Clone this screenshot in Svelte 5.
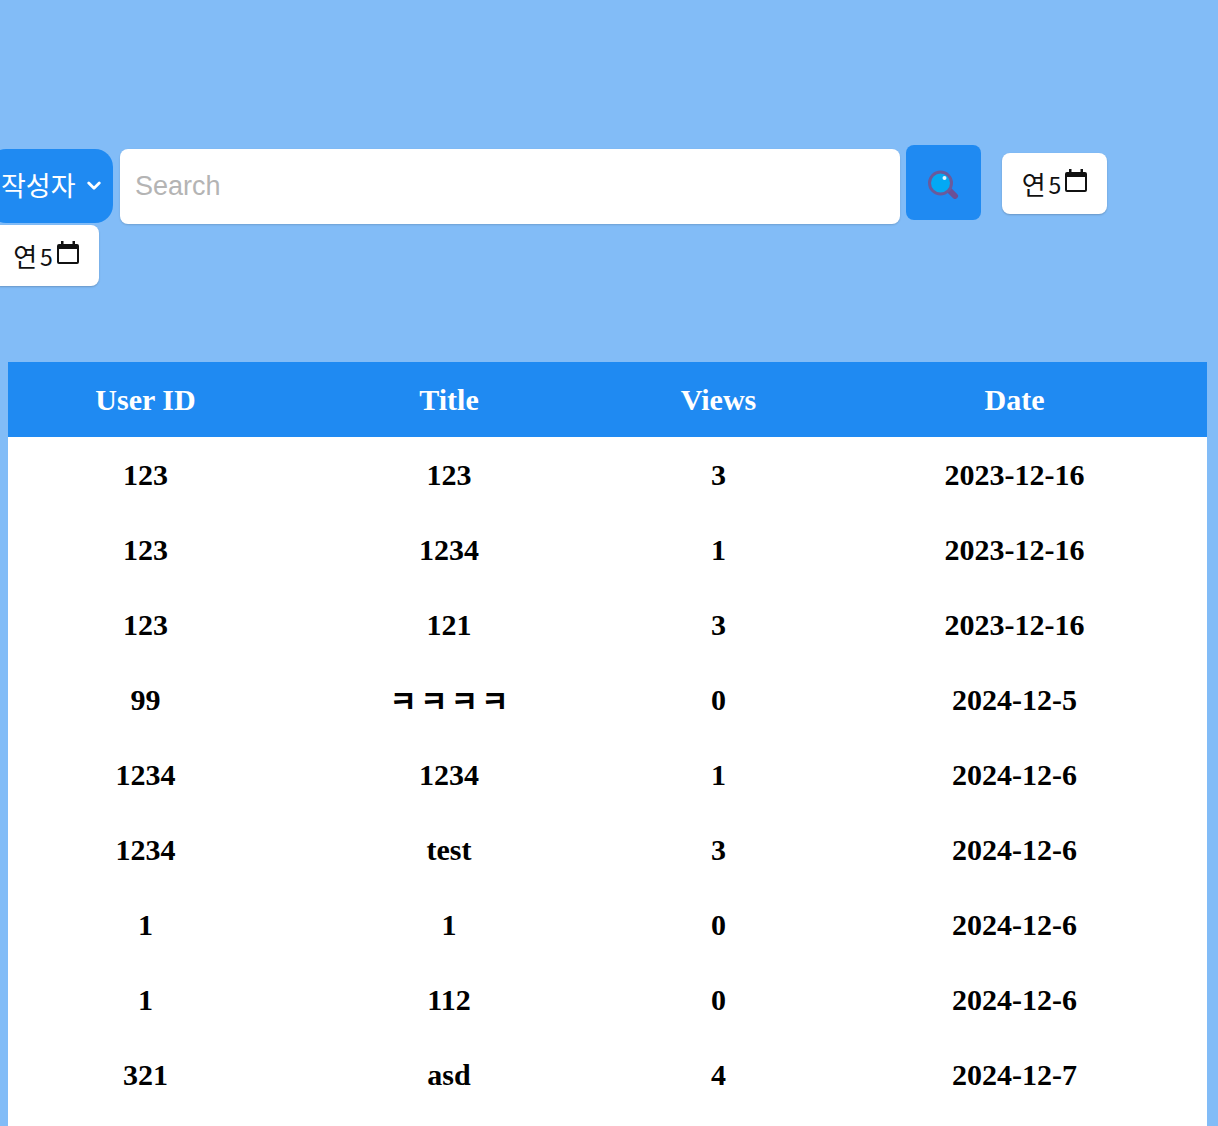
<script>
	const rows = [
		["123", "123", "3", "2023-12-16"],
		["123", "1234", "1", "2023-12-16"],
		["123", "121", "3", "2023-12-16"],
		["99", "ㅋㅋㅋㅋ", "0", "2024-12-5"],
		["1234", "1234", "1", "2024-12-6"],
		["1234", "test", "3", "2024-12-6"],
		["1", "1", "0", "2024-12-6"],
		["1", "112", "0", "2024-12-6"],
		["321", "asd", "4", "2024-12-7"]
	];
	const isKorean = (s) => /[ㄱ-ㅎ가-힣]/.test(s);
</script>

{#snippet dateBox(cls)}
	<div class="date-box {cls}">
		<span class="date-label">연<span class="digit">5</span></span>
		<svg class="cal" viewBox="0 0 22 23" width="22" height="23">
			<path fill="#111" fill-rule="evenodd" d="M4 0h2.500v3h9V0H18v3h2a2 2 0 0 1 2 2v16a2 2 0 0 1-2 2H2a2 2 0 0 1-2-2V5a2 2 0 0 1 2-2h2zM2 8v13h18V8z"/>
		</svg>
	</div>
{/snippet}

<div class="page">
	<div class="search-bar">
		<button class="category">작성자
			<svg viewBox="0 0 12 8" width="14" height="10">
				<path d="M1.500 1.500 6 6l4.500-4.500" fill="none" stroke="#fff" stroke-width="2.400" stroke-linecap="round" stroke-linejoin="round"/>
			</svg>
		</button>
		<input class="search" type="text" placeholder="Search" />
		<button class="go" aria-label="Search">
			<svg viewBox="0 0 32 32" width="32" height="32">
				<path d="M22 24l5 5" stroke="#6b4f96" stroke-width="6" stroke-linecap="round"/>
				<circle cx="12.500" cy="16" r="11" fill="#03a9f4" stroke="#6a5a9c" stroke-width="3"/>
				<circle cx="16.500" cy="11" r="2" fill="#e4f7ff"/>
			</svg>
		</button>
		{@render dateBox("first")}
		<div class="break"></div>
		{@render dateBox("second")}
	</div>

	<table>
		<colgroup>
			<col class="c1" /><col class="c2" /><col class="c3" /><col class="c4" />
		</colgroup>
		<thead>
			<tr><th>User ID</th><th>Title</th><th>Views</th><th>Date</th></tr>
		</thead>
		<tbody>
			{#each rows as row}
				<tr>
					{#each row as cell}
						<td>
							{#if isKorean(cell)}
								<span class="ko">{cell}</span>
							{:else}
								{cell}
							{/if}
						</td>
					{/each}
				</tr>
			{/each}
			<tr class="spare"><td colspan="4"></td></tr>
		</tbody>
	</table>
</div>

<style>
	:global(body) {
		margin: 0;
		background: #82bcf7;
		overflow: hidden;
	}
	.page {
		height: 1126px;
		overflow: hidden;
	}
	.search-bar {
		display: flex;
		flex-wrap: wrap;
		align-items: flex-start;
		align-content: flex-start;
		padding-top: 145px;
		height: 217px;
	}
	.break {
		flex-basis: 100%;
		height: 0;
	}
	.category {
		width: 125px;
		height: 74px;
		margin: 4px 0 0 -12px;
		padding: 0 0 4px 13px;
		display: flex;
		align-items: center;
		gap: 11px;
		background: #1f8af2;
		color: #fff;
		border: 0;
		border-radius: 18px;
		font: 27px "Noto Sans CJK KR", "Liberation Sans", sans-serif;
	}
	.category svg {
		margin-top: 4px;
	}
	.search {
		width: 780px;
		height: 75px;
		margin: 4px 0 0 7px;
		padding: 0 15px;
		box-sizing: border-box;
		border: 0;
		border-radius: 8px;
		background: #fff;
		box-shadow: 0 1px 2px rgba(0, 0, 0, 0.15);
		font: 27px "Liberation Sans", Arial, sans-serif;
	}
	.search::placeholder {
		color: #b4b4b4;
		opacity: 1;
	}
	.go {
		width: 75px;
		height: 75px;
		margin-left: 6px;
		padding: 0;
		display: flex;
		align-items: center;
		justify-content: center;
		background: #1f8af2;
		border: 0;
		border-radius: 8px;
	}
	.date-box {
		height: 61px;
		display: flex;
		align-items: center;
		justify-content: center;
		gap: 4px;
		background: #fff;
		border-radius: 8px;
		box-shadow: 0 1px 2px rgba(0, 0, 0, 0.2);
		color: #111;
		font: 26px "Noto Sans CJK KR", "Liberation Sans", sans-serif;
	}
	.first {
		width: 105px;
		margin: 8px 0 0 21px;
	}
	.second {
		width: 106px;
		margin: 1px 0 0 -7px;
	}
	.date-label {
		display: flex;
		align-items: center;
		gap: 3px;
	}
	.digit {
		font-size: 23px;
	}
	.cal {
		flex: none;
		margin-bottom: 7px;
	}
	table {
		width: 1199px;
		margin: 0 0 0 8px;
		border-collapse: collapse;
		table-layout: fixed;
		background: #fff;
		font-family: "Liberation Serif", "Noto Sans CJK KR", serif;
		font-size: 30px;
		font-weight: bold;
	}
	.c1 { width: 275px; }
	.c2 { width: 332px; }
	.c3 { width: 207px; }
	.c4 { width: 385px; }
	th, td {
		height: 75px;
		box-sizing: border-box;
		padding: 0;
		text-align: center;
	}
	th {
		background: #1f8af2;
		color: #fff;
	}
	td {
		color: #000;
	}
	.ko {
		letter-spacing: 3px;
		margin-right: -3px;
		vertical-align: 3px;
	}
</style>
